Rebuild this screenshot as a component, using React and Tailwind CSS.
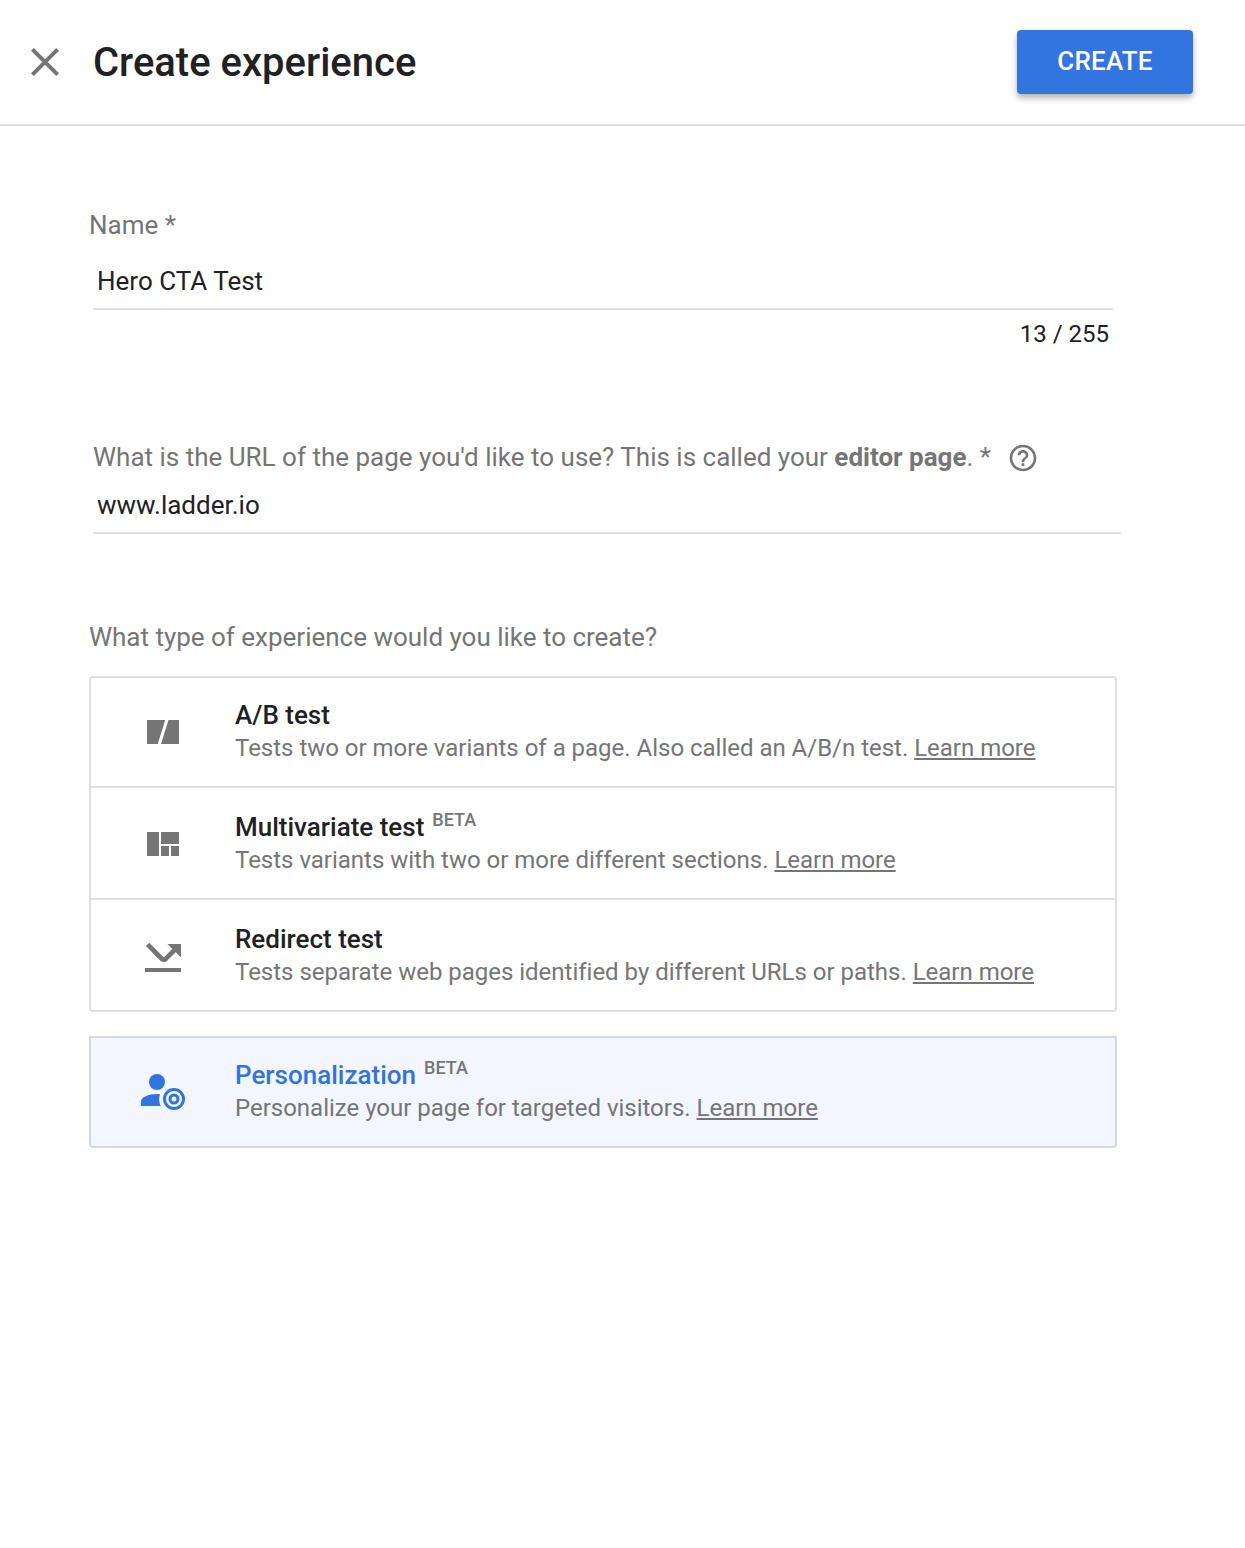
const G = "#757575";

function Field({ children, className }) {
  return <div className={`flex h-[56px] items-center border-b-2 border-[#e0e0e0] pl-1 text-[26px] text-[#212121] ${className}`}>{children}</div>;
}

const tests = [
  {
    title: "A/B test",
    text: "Tests two or more variants of a page. Also called an A/B/n test.",
    icon: (
      <svg width="44" height="44" viewBox="0 0 44 44" fill={G}>
        <path d="M6 10h18.200l-7.500 24H6zM27.500 10H38v24H20z" />
      </svg>
    ),
  },
  {
    title: "Multivariate test",
    beta: true,
    text: "Tests variants with two or more different sections.",
    icon: (
      <svg width="44" height="44" viewBox="0 0 44 44" fill={G}>
        <path d="M6 10h12v24H6zM20 10h18v12H20zM20 24h8v10h-8zM30 24h8v10h-8z" />
      </svg>
    ),
  },
  {
    title: "Redirect test",
    text: "Tests separate web pages identified by different URLs or paths.",
    icon: (
      <svg width="44" height="44" viewBox="0 0 44 44" fill={G}>
        <path d="M4 34h36v4H4zM26.500 10H40v13.500z" />
        <path d="M6.600 10.400L20.600 24.600q2.200 2 4.400 0L36 13.500" fill="none" stroke={G} strokeWidth="4.800" />
      </svg>
    ),
  },
];

function Option({ title, beta, text, icon, selected }) {
  return (
    <div className="flex h-full items-center pl-[50px]">
      <div className="w-[94px] shrink-0">{icon}</div>
      <div className="pb-px">
        <div className={`flex h-8 items-center whitespace-nowrap text-[26px] font-medium ${selected ? "text-[#3074e0]" : "text-[#212121]"}`}>
          {title}
          {beta && <span className="mb-[14px] ml-2 text-[18px] leading-none text-[#757575]">BETA</span>}
        </div>
        <div className="mt-px h-8 whitespace-nowrap text-[24px] leading-8 tracking-[-0.014px] text-[#757575]">
          {text} <a className="underline">Learn more</a>
        </div>
      </div>
    </div>
  );
}

export default function App() {
  return (
    <div className="h-[1548px] w-[1245px] overflow-hidden bg-white font-['Roboto',sans-serif] text-[#757575]">
      <header className="flex h-[126px] items-center border-b-2 border-[#e0e0e0] pl-[31px] pr-[52px]">
        <svg width="28" height="28" viewBox="0 0 28 28" stroke={G} strokeWidth="4">
          <path d="M1.4 1.4l25.2 25.2M26.6 1.4L1.4 26.6" />
        </svg>
        <h1 className="ml-[34px] pt-0.5 text-[40px] font-medium text-[#212121]">Create experience</h1>
        <button className="ml-auto h-16 w-44 rounded-[4px] bg-[#3275e1] pb-0.5 text-[26px] font-medium tracking-[0.2px] text-white shadow-[0_4px_6px_rgba(0,0,0,0.3)]">CREATE</button>
      </header>
      <main className="pl-[89px] pt-[79px]">
        <label className="block h-10 text-[26px] leading-10">Name *</label>
        <Field className="ml-1 mt-[9px] w-[1020px]">Hero CTA Test</Field>
        <div className="mt-2 w-[1020px] text-right text-[24px] leading-8 text-[#212121]">13 / 255</div>
        <div className="ml-1 mt-[87px] flex h-10 items-center whitespace-nowrap text-[26px]">
          <span>What is the URL of the page you'd like to use? This is called your <b className="font-bold">editor page</b>. *</span>
          <svg className="ml-4 mt-0.5" width="32" height="32" viewBox="0 0 24 24" fill={G}>
            <path d="M11 18h2v-2h-2v2zm1-16C6.48 2 2 6.48 2 12s4.48 10 10 10 10-4.48 10-10S17.52 2 12 2zm0 18c-4.41 0-8-3.59-8-8s3.59-8 8-8 8 3.59 8 8-3.59 8-8 8zm0-14c-2.21 0-4 1.79-4 4h2c0-1.1.9-2 2-2s2 .9 2 2c0 2-3 1.75-3 5h2c0-2.25 3-2.5 3-5 0-2.21-1.79-4-4-4z" />
          </svg>
        </div>
        <Field className="ml-1 mt-px w-[1028px]">www.ladder.io</Field>
        <div className="mt-[83px] h-10 text-[26px] leading-10 tracking-[-0.01px]">What type of experience would you like to create?</div>
        <div className="mt-[19px] h-[336px] w-[1028px] divide-y-2 divide-[#e0e0e0] rounded-[4px] border-2 border-[#e0e0e0]">
          {tests.map((t, i) => (
            <div key={t.title} className={i === 0 ? "h-[110px]" : i === 1 ? "h-[112px] pt-0.5" : "h-[110px] pt-0.5"}><Option {...t} /></div>
          ))}
        </div>
        <div className="mt-6 h-[112px] w-[1028px] rounded-b-[4px] border-2 border-[#d5d9df] bg-[#f3f6fe]">
          <Option
            selected
            beta
            title="Personalization"
            text="Personalize your page for targeted visitors."
            icon={
              <svg width="44" height="44" viewBox="0 0 44 44" fill="#3074e0">
                <circle cx="16" cy="12" r="8" />
                <path d="M19 24C8 23.500 0 27 0 31.500V36h19.700a16 16 0 0 1-.7-12z" />
                <circle cx="33" cy="29" r="9.500" fill="none" stroke="#3074e0" strokeWidth="3" />
                <circle cx="33" cy="29" r="4" fill="none" stroke="#3074e0" strokeWidth="3" />
              </svg>
            }
          />
        </div>
      </main>
    </div>
  );
}
